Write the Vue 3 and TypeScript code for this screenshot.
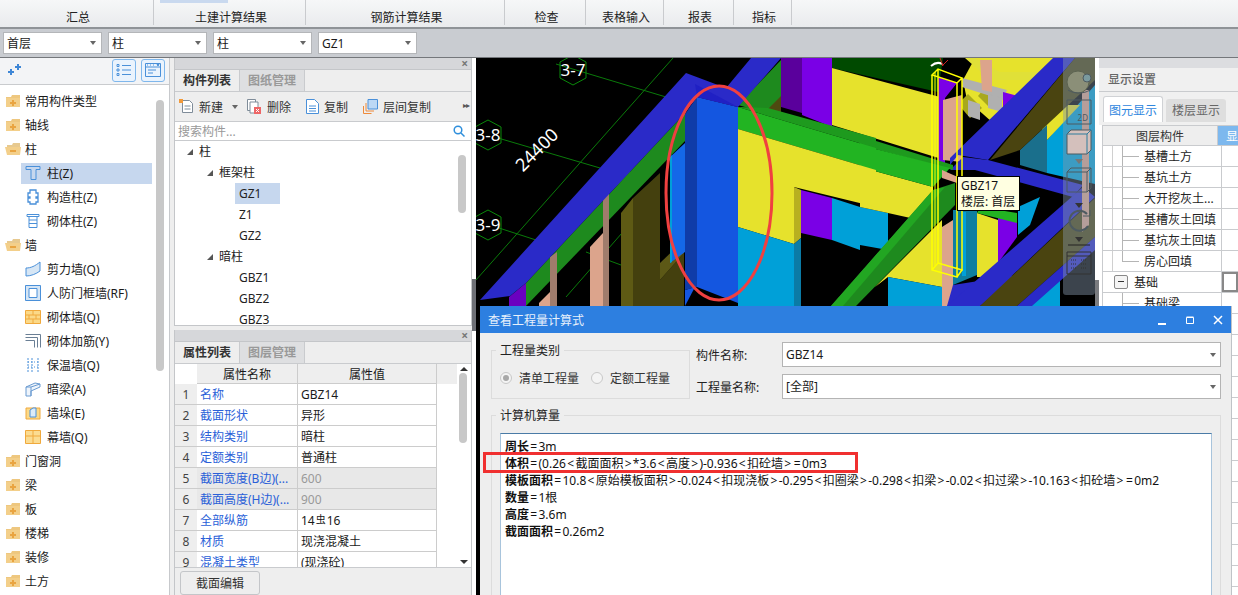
<script setup lang="ts">
interface TreeRow { label: string; icon: string; level: number; selected?: boolean }
const ribbon = [
  { label: '汇总', w: 154 }, { label: '土建计算结果', w: 152 }, { label: '钢筋计算结果', w: 199 },
  { label: '检查', w: 81 }, { label: '表格输入', w: 78 }, { label: '报表', w: 70 }, { label: '指标', w: 58 },
]
const selects = ['首层', '柱', '柱', 'GZ1']
const leftTree: TreeRow[] = [
  { label: '常用构件类型', icon: 'folder', level: 0 }, { label: '轴线', icon: 'folder', level: 0 },
  { label: '柱', icon: 'open', level: 0 }, { label: '柱(Z)', icon: 'col', level: 1, selected: true },
  { label: '构造柱(Z)', icon: 'gz', level: 1 }, { label: '砌体柱(Z)', icon: 'qt', level: 1 },
  { label: '墙', icon: 'open', level: 0 }, { label: '剪力墙(Q)', icon: 'shear', level: 1 },
  { label: '人防门框墙(RF)', icon: 'door', level: 1 }, { label: '砌体墙(Q)', icon: 'brick', level: 1 },
  { label: '砌体加筋(Y)', icon: 'rebar', level: 1 }, { label: '保温墙(Q)', icon: 'warm', level: 1 },
  { label: '暗梁(A)', icon: 'beam', level: 1 }, { label: '墙垛(E)', icon: 'pier', level: 1 },
  { label: '幕墙(Q)', icon: 'curtain', level: 1 }, { label: '门窗洞', icon: 'folder', level: 0 },
  { label: '梁', icon: 'folder', level: 0 }, { label: '板', icon: 'folder', level: 0 },
  { label: '楼梯', icon: 'folder', level: 0 }, { label: '装修', icon: 'folder', level: 0 },
  { label: '土方', icon: 'folder', level: 0 },
]
const compTree = [
  { label: '柱', level: 0, arrow: true }, { label: '框架柱', level: 1, arrow: true },
  { label: 'GZ1', level: 2, selected: true }, { label: 'Z1', level: 2 }, { label: 'GZ2', level: 2 },
  { label: '暗柱', level: 1, arrow: true }, { label: 'GBZ1', level: 2 }, { label: 'GBZ2', level: 2 }, { label: 'GBZ3', level: 2 },
]
const props = [
  ['名称', 'GBZ14'], ['截面形状', '异形'], ['结构类别', '暗柱'], ['定额类别', '普通柱'],
  ['截面宽度(B边)(...', '600'], ['截面高度(H边)(...', '900'], ['全部纵筋', ''],
  ['材质', '现浇混凝土'], ['混凝土类型', '(现浇砼)'],
]
const layerRows = ['基槽土方', '基坑土方', '大开挖灰土...', '基槽灰土回填', '基坑灰土回填', '房心回填']
const emptyRows = Array.from({ length: 14 }, (_, i) => i)
const calc = [
  ['周长', '=3m'],
  ['体积', '=(0.26<截面面积>*3.6<高度>)-0.936<扣砼墙>=0m3'],
  ['模板面积', '=10.8<原始模板面积>-0.024<扣现浇板>-0.295<扣圈梁>-0.298<扣梁>-0.02<扣过梁>-10.163<扣砼墙>=0m2'],
  ['数量', '=1根'], ['高度', '=3.6m'], ['截面面积', '=0.26m2'],
]
const tokens = (s: string) => s.split(/([<>=])/).filter((t) => t.length > 0)
const isSym = (t: string) => t === '<' || t === '>' || t === '='
const shapes: [string, string][] = [
  ['#004a00', '832,58 943,58 938,92 832,68'],
  ['#e6e22c', '832,68 940,97 945,160 832,125'],
  ['#5a009c', '781,58 802,58 802,113 781,107'],
  ['#7a00e6', '802,58 832,58 832,127 802,115'],
  ['#1e8a1e', '738,105 781,60 781,100 766,113'],
  ['#4e4a10', '765,112 781,96 781,112'],
  ['#7a00e6', '938,77 957,83 945,98 945,165 938,165'],
  ['#e6e22c', '975,58 1055,58 992,122 967,100 963,80'],
  ['#a8a81c', '968,94 982,108 970,118 958,104'],
  ['#a8a81c', '988,84 1000,96 990,108 978,96'],
  ['#e0e038', '965,58 975,58 1000,72 1040,72 1030,80 990,80'],
  ['#b0b0b0', '962,78 1007,90 1003,100 962,87'],
  ['#b0b0b0', '968,100 980,104 980,120 968,116'],
  ['#b0b0b0', '988,94 1002,98 1002,112 988,108'],
  ['#7a00e6', '1003,92 1018,96 1006,110 1003,108'],
  ['#dca48c', '980,60 992,60 992,92 982,90'],
  ['#dca48c', '943,100 962,95 962,162 943,160'],
  ['#00a0d8', '1047,140 1095,85 1095,184 1047,173'],
  ['#e6e22c', '1040,125 1060,105 1080,105 1047,140'],
  ['#1a6f8c', '1020,150 1047,125 1047,173 1020,165'],
  ['#00a0d8', '860,207 888,213 888,250 860,245'],
  ['#e6e22c', '860,167 933,187 933,223 888,213 860,207'],
  ['#e6e22c', '875,287 942,220 942,287 888,277'],
  ['#00a0d8', '888,277 942,287 942,306 888,306'],
  ['#dca48c', '942,227 953,220 953,306 942,306'],
  ['#0e7fa0', '953,210 977,210 977,275 953,285'],
  ['#00a0d8', '962,212 966,212 966,276 962,276'],
  ['#e6e22c', '977,213 998,220 998,277 977,277'],
  ['#7a00e6', '998,217 1017,220 1017,237 998,263'],
  ['#00a0d8', '1018,207 1040,197 1030,225 1018,235'],
  ['#22b422', '980,207 1017,213 1017,223 977,213'],
  ['#2a2ac8', '953,285 1017,275 980,306 947,306'],
  ['#00a0d8', '1020,306 1060,277 1060,306'],
  ['#2a2ac8', '1053,58 1075,58 988,160 958,155 950,165 950,158'],
  ['#4a4410', '1075,58 1095,58 1095,80 1020,150 990,160'],
  ['#2a2ac8', '963,157 988,160 1083,185 1073,197 975,170 950,170'],
  ['#2a2ac8', '947,306 1083,187 1095,197 980,306'],
  ['#4a4410', '980,306 1095,198 1095,237 1017,306'],
  ['#2a2ac8', '1017,306 1095,237 1095,250 1032,306'],
  ['#dca48c', '1082,90 1089,90 1089,225 1082,232'],
  ['#1e9a1e', '860,136 953,165 953,170 860,145'],
  ['#22b422', '860,145 950,168 933,187 860,167'],
  ['#1e8a1e', '831,306 933,190 955,183 955,205 856,306'],
  ['#22a622', '831,306 933,190 945,187 843,306'],
  ['#dca48c', '942,170 960,178 957,183 942,178'],
  ['#1e9a1e', '768,108 876,138 876,148 738,107'],
  ['#22b422', '738,107 876,148 876,170 738,129'],
  ['#e6e22c', '738,129 876,170 876,207 794,187 794,244 738,227'],
  ['#b8b020', '794,187 801,190 801,238 794,244'],
  ['#7a00e6', '801,190 832,198 832,240 801,233'],
  ['#00a0d8', '832,198 860,207 860,250 832,240'],
  ['#00a0d8', '738,227 794,244 794,306 738,306'],
  ['#0b7ba6', '794,244 801,238 801,306 794,306'],
  ['#1e8a1e', '526,283 685,113 685,141 526,306'],
  ['#6a00c0', '509,297 526,283 526,306 509,306'],
  ['#5e5a14', '621,213 633,198 633,306 621,306'],
  ['#44400e', '633,198 660,173 660,280 684,253 684,306 633,306'],
  ['#5c5816', '660,263 684,240 684,253 660,280'],
  ['#a07c6c', '603,193 609,193 609,306 603,306'],
  ['#dca48c', '590,247 603,233 603,306 590,306'],
  ['#a07c6c', '550,257 557,252 557,306 550,306'],
  ['#dca48c', '539,303 550,292 550,306 539,306'],
  ['#1468e8', '670,157 685,143 685,252 670,263'],
  ['#00a0d8', '670,157 672,155 672,262 670,263'],
  ['#1456e0', '685,290 695,287 685,306'],
  ['#0f3ca8', '685,114 697,97 697,287 685,290'],
  ['#1456e0', '697,97 738,107 738,303 697,287'],
  ['#2a2ac8', '480,300 686,73 726,88 751,58 781,58 738,107 697,97 685,113 526,283 510,296'],
  ['#2020c4', '695,84 738,107 697,97'],
]
const gridLines = [
  [556, 64, 666, 97], [498, 138, 600, 168], [499, 228, 536, 240], [586, 252, 621, 265],
  [673, 58, 476, 280], [636, 217, 566, 297], [630, 172, 604, 198],
]
const hexes = [
  { x: 573, y: 70, t: '3-7' }, { x: 488, y: 135, t: '3-8' }, { x: 488, y: 225, t: '3-9' },
]
const hexPts = (x: number, y: number) =>
  [[0, -15], [13, -8], [13, 8], [0, 15], [-13, 8], [-13, -8]].map(([a, b]) => `${x + a},${y + b}`).join(' ')
</script>

<template>
  <div class="app">
    <svg class="defs" width="0" height="0">
      <symbol id="folder" viewBox="0 0 16 14">
        <path d="M1 3h5l1-2h8v12H1z" fill="#eec77f" /><path d="M1 4h14v9H1z" fill="#f3cf8a" />
        <path d="M7 6h2v2h2v2H9v2H7v-2H5V8h2z" fill="#e9a441" />
      </symbol>
      <symbol id="open" viewBox="0 0 16 14">
        <path d="M2 3h5l1-2h7v4H2z" fill="#e7c98f" /><path d="M0 5h16l-1 8H2z" fill="#f3cf8a" />
        <path d="M5 8h6v2H5z" fill="#e9a441" />
      </symbol>
      <symbol id="col" viewBox="0 0 16 16" fill="none" stroke="#4a90d9">
        <path d="M1 1.5h14v3H11v10H6v-10H1z" />
      </symbol>
      <symbol id="gz" viewBox="0 0 16 16" fill="none" stroke="#4a90d9" stroke-width="1.3">
        <path d="M5 1h6v3h2v4h-2v1h2v4h-2v2H5v-2H3V9h2V8H3V4h2z" />
      </symbol>
      <symbol id="qt" viewBox="0 0 16 16" fill="none" stroke="#4a90d9">
        <path d="M2 1.5h12v2H2zM4 3.5h8v11H4zM4 7h8M4 10.5h8" />
      </symbol>
      <symbol id="shear" viewBox="0 0 16 16" fill="#d6e6f5" stroke="#4a90d9">
        <path d="M1 7c5 0 9-2 14-6v9c-4 3-9 5-14 5z" />
      </symbol>
      <symbol id="door" viewBox="0 0 16 16" fill="#d6e6f5" stroke="#4a90d9">
        <path d="M.5.5h15v15H.5z" /><path d="M4 3.5h8v9H4z" fill="#fff" />
      </symbol>
      <symbol id="brick" viewBox="0 0 16 16" fill="#fbd988" stroke="#f0a93c">
        <path d="M.5 1.5h15v13H.5zM.5 6h15M.5 10h15M8 1.5V6M4 6v4M11 6v4M8 10v4.5" />
      </symbol>
      <symbol id="rebar" viewBox="0 0 16 16" fill="none" stroke="#6a7f95">
        <path d="M.5 1.5h15v13M.5 4.5h12v10M.5 7.5h9v7" />
      </symbol>
      <symbol id="warm" viewBox="0 0 16 16" fill="none" stroke="#4a90d9">
        <path d="M3 1v14M13 1v14M7 1v14" stroke-dasharray="2 1" /><path d="M3 5h10M3 10h10" stroke-dasharray="1 2" />
      </symbol>
      <symbol id="beam" viewBox="0 0 16 16" fill="#eef4fb" stroke="#6a9bd1">
        <path d="M1 6l9-4 5 1v3l-9 4v5H1z" /><path d="M1 6h5v9M6 6l9-3" fill="none" />
      </symbol>
      <symbol id="pier" viewBox="0 0 16 16" fill="#fbd988" stroke="#f0a93c">
        <path d="M1 3h14v11H1z" /><path d="M5 5l3-2h3v9H5z" fill="#dcebf8" stroke="#4a90d9" />
      </symbol>
      <symbol id="curtain" viewBox="0 0 16 16" fill="#fbdc92" stroke="#f0a93c">
        <path d="M.5 1.5h15v13H.5zM.5 7h15M8 1.5v13" />
      </symbol>
    </svg>

    <header class="ribbon">
      <span class="ribbon-mark"></span>
      <div v-for="r in ribbon" :key="r.label" class="ribbon-tab" :style="{ width: r.w + 'px' }">{{ r.label }}</div>
    </header>

    <div class="selectbar">
      <div v-for="(s, i) in selects" :key="i" class="sel"><span>{{ s }}</span><i class="caret"></i></div>
    </div>

    <div class="main">
      <aside class="left">
        <div class="left-head">
          <svg class="sparkle" width="14" height="12" viewBox="0 0 14 12" fill="#3f87d6">
            <path d="M8 2h2V0h2v2h2v2h-2v2h-2V4H8zM1 7h2V5h2v2h2v2H5v2H3V9H1z" />
          </svg>
          <button class="head-btn"><svg width="16" height="14" viewBox="0 0 16 14" fill="none" stroke="#4a90d9"><path d="M1 1.500h2v2H1zM1 6h2v2H1zM1 10.500h2v2H1zM6 2.500h9M6 7h9M6 11.500h9" /></svg></button>
          <button class="head-btn"><svg width="16" height="14" viewBox="0 0 16 14" fill="none" stroke="#4a90d9"><path d="M.5.5h15v13H.5zM.5 4h15" /><path d="M3 7h8M3 10h5" /><path d="M2 2h1M5 2h1M8 2h1M12 1.500h2l-1 1.500z" /></svg></button>
        </div>
        <div class="left-body">
          <div v-for="r in leftTree" :key="r.label" class="lt-row" :class="{ child: r.level === 1 }">
            <div class="lt-inner" :class="{ on: r.selected }">
              <svg class="lt-icon" width="16" height="16"><use :href="'#' + r.icon" /></svg>
              <span>{{ r.label }}</span>
            </div>
          </div>
          <div class="left-scroll"></div>
        </div>
      </aside>

      <section class="mid">
        <div class="pane top-pane">
          <div class="pane-title"><span class="x">×</span></div>
          <div class="tabs">
            <div class="tab on">构件列表</div><div class="tab">图纸管理</div>
          </div>
          <div class="tools">
            <span class="tool t1">
              <svg width="15" height="15" viewBox="0 0 15 15" fill="none" stroke="#7f8c99"><path d="M3.500 1.500h7l3 3v9h-10z" fill="#fff" /><path d="M5.500 7h6M5.500 10h6" /><path d="M0 0h4v4H0z" fill="#f29a3a" stroke="none" /></svg>
              新建<i class="caret tool-caret"></i>
            </span>
            <span class="tool t2">
              <svg width="15" height="15" viewBox="0 0 15 15" fill="none" stroke="#7f8c99"><path d="M.5.5h8v11h-8z" fill="#fff" /><path d="M3 3h8v11H3z" fill="#fff" /><path d="M7 8h7v7H7z" fill="#e66" stroke="none" /><path d="M9 10l3 3M12 10l-3 3" stroke="#fff" /></svg>
              删除
            </span>
            <span class="tool t3">
              <svg width="13" height="15" viewBox="0 0 13 15" fill="none" stroke="#4a90d9"><path d="M.5.5h8l4 4v10H.5z" fill="#fff" /><path d="M3 7h7M3 9.500h7M3 12h7" /></svg>
              复制
            </span>
            <span class="tool t4">
              <svg width="15" height="15" viewBox="0 0 15 15" fill="none"><path d="M5 .5h9.500v9.500H5z" fill="#bcd8f5" stroke="#4a90d9" /><path d="M3 4v8h8M.5 7v7.500h8" stroke="#ee8a3a" /></svg>
              层间复制
            </span>
            <span class="more">▸▸</span>
          </div>
          <div class="search">
            <span>搜索构件...</span>
            <svg width="12" height="12" viewBox="0 0 12 12" fill="none" stroke="#2f8fdc" stroke-width="1.500"><circle cx="5" cy="5" r="3.800" /><path d="M8 8l3.500 3.500" /></svg>
          </div>
          <div class="comp-tree">
            <div v-for="c in compTree" :key="c.label" class="ct-row" :class="'lv' + c.level">
              <i v-if="c.arrow" class="tri"></i>
              <span :class="{ on: c.selected }">{{ c.label }}</span>
            </div>
            <div class="ct-scroll"></div>
          </div>
        </div>

        <div class="pane bottom-pane">
          <div class="pane-title"><span class="x">×</span></div>
          <div class="tabs">
            <div class="tab on">属性列表</div><div class="tab">图层管理</div>
          </div>
          <div class="table-wrap">
            <div class="prop-head">
              <span class="num"></span><span class="ph">属性名称</span><span class="ph ph2">属性值</span><span class="ph3"></span>
            </div>
            <div v-for="(p, i) in props" :key="p[0]" class="prop-row" :class="{ gray: i === 4 || i === 5 }">
              <span class="num">{{ i + 1 }}</span>
              <span class="pn">{{ p[0] }}</span>
              <span v-if="i === 6" class="pv">14<span class="bar-mark">虫</span>16</span>
              <span v-else class="pv">{{ p[1] }}</span>
            </div>
            <div class="vbar"><i class="up"></i><i class="thumb"></i><i class="down"></i></div>
          </div>
          <div class="pane-foot"><button class="foot-btn">截面编辑</button></div>
        </div>
      </section>

      <div class="split"><i></i></div>

      <div class="canvas">
        <svg class="scene" viewBox="476 58 619 537" width="619" height="537">
          <line v-for="(l, i) in gridLines" :key="i" :x1="l[0]" :y1="l[1]" :x2="l[2]" :y2="l[3]" stroke="#0a7a0a" />
          <g v-for="h in hexes" :key="h.t">
            <polygon :points="hexPts(h.x, h.y)" fill="none" stroke="#0a8a0a" />
            <text :x="h.x" :y="h.y + 6" text-anchor="middle" class="hex-t">{{ h.t }}</text>
          </g>
          <text x="537" y="156" text-anchor="middle" class="dim" transform="rotate(-45 537 150)">24400</text>
          <polygon v-for="(s, i) in shapes" :key="i" :fill="s[0]" :points="s[1]" />
          <g fill="none" stroke="#ffff00" stroke-width="1.500">
            <path d="M932 75L938 69L962 78L957 83ZM932 75V270L957 277V83M938 69V263L962 270V78M932 270L938 263L962 270L957 277" />
            <path d="M935 72V266" stroke-width="1" />
          </g>
          <path d="M931 66q6-5 11-2" fill="none" stroke="#fff" stroke-width="2" />
          <path d="M940 58l3 8 M948 60l-6 6" stroke="#c22" fill="none" />
          <ellipse cx="719" cy="193" rx="53" ry="107" fill="none" stroke="#f04040" stroke-width="3" />
        </svg>

        <div class="viewbar">
          <svg width="32" height="237" viewBox="0 0 32 237" fill="none" stroke="#4d5a60">
            <circle cx="15" cy="24" r="11" fill="#8b8f78" stroke="#5c6350" />
            <circle cx="24" cy="20" r="4" fill="#7a9a9e" stroke="#4d5a60" />
            <path d="M5 32c6 4 16 4 22 0" />
            <path d="M4 42h24v24H4z" /><text x="25" y="63" text-anchor="end" class="v2d">2D</text>
            <path d="M4 76l4-4h20v20l-4 4H4z" fill="#d4c0bc" /><path d="M4 76h20v20M24 76l4-4" stroke="#2f7c9c" />
            <path d="M12 101h8l-4 5z" fill="#777" stroke="none" />
            <path d="M4 114l4-4h20v20l-4 4H4z" /><path d="M4 114h20v20M24 114l4-4" />
            <path d="M12 145h8l-4 5z" fill="#333" stroke="none" />
            <path d="M24 156a10 10 0 1 0 1 12" stroke-width="2" /><path d="M20 158h7v-6" />
            <path d="M12 179h8l-4 5z" fill="#333" stroke="none" />
            <path d="M5 187h22" stroke="#222" />
            <path d="M4 194h24v22H4zM4 198h24" stroke="#333" /><path d="M8 202h5M8 206h5M8 210h5M18 202h6M18 206h6M18 210h6" stroke-dasharray="1 1" stroke="#333" />
          </svg>
        </div>

        <div class="tip">GBZ17<br />楼层: 首层</div>
      </div>

      <aside class="right">
        <i class="grip"></i>
        <div class="r-strip"></div>
        <div class="r-title">显示设置</div>
        <div class="r-tabs"><div class="r-tab on">图元显示</div><div class="r-tab">楼层显示</div></div>
        <div class="r-table">
          <div class="r-head"><span class="rh1">图层构件</span><span class="rh2">显</span></div>
          <div v-for="(l, i) in layerRows" :key="l" class="r-row">
            <span class="r-name up-line"><i class="vline" :class="{ last: i === 5 }"></i><i class="hline"></i>{{ l }}</span><span class="r-val"></span>
          </div>
          <div class="r-row">
            <span class="r-name group"><i class="minus"></i>基础</span><span class="r-val cur"></span>
          </div>
          <div class="r-row">
            <span class="r-name"><i class="vline"></i><i class="hline"></i>基础梁</span><span class="r-val"></span>
          </div>
          <div v-for="n in emptyRows" :key="n" class="r-row"><span class="r-name"></span><span class="r-val"></span></div>
        </div>
      </aside>
    </div>

    <div class="dialog">
      <div class="d-title">
        <span>查看工程量计算式</span>
        <div class="d-btns">
          <svg width="10" height="10" viewBox="0 0 10 10"><path d="M1 8h8v2H1z" fill="#fff" /></svg>
          <svg width="10" height="10" viewBox="0 0 10 10" fill="none" stroke="#fff"><path d="M1.500 2.500h7v6h-7zM1.500 2h7" /></svg>
          <svg width="10" height="10" viewBox="0 0 10 10" stroke="#fff" stroke-width="1.500"><path d="M1 1l8 8M9 1l-8 8" /></svg>
        </div>
      </div>
      <div class="d-body">
        <div class="d-top">
          <fieldset class="kind">
            <legend>工程量类别</legend>
            <label class="radio"><i class="dot checked"></i>清单工程量</label>
            <label class="radio"><i class="dot"></i>定额工程量</label>
          </fieldset>
          <div class="fields">
            <div class="field"><span class="f-label">构件名称:</span><div class="f-input">GBZ14<i class="caret"></i></div></div>
            <div class="field"><span class="f-label">工程量名称:</span><div class="f-input">[全部]<i class="caret"></i></div></div>
          </div>
        </div>
        <fieldset class="calc">
          <legend>计算机算量</legend>
          <div class="calc-box">
            <div v-for="c in calc" :key="c[0]" class="calc-line"><b>{{ c[0] }}</b><template v-for="(t, i) in tokens(c[1])" :key="i"><span v-if="isSym(t)" class="sym">{{ t }}</span><template v-else>{{ t }}</template></template></div>
          </div>
        </fieldset>
      </div>
    </div>
    <div class="red-box"></div>
  </div>
</template>

<style>
html, body { margin: 0; background: #eee; }
</style>

<style scoped>
.app {
  position: relative; width: 1238px; height: 595px; overflow: hidden; display: flex; flex-direction: column;
  font-family: "Noto Sans", "Noto Sans CJK SC", sans-serif; font-size: 12px; color: #1a1a1a; background: #eee;
}
.defs { position: absolute; }
.ribbon {
  position: relative; height: 27px; flex: none; display: flex;
  background: linear-gradient(#f6f7f8, #e9ebed); border-bottom: 2px solid #8f9397;
}
.ribbon-mark { position: absolute; left: 160px; top: 0; width: 68px; height: 3px; background: #c9d9ef; }
.ribbon-tab {
  box-sizing: border-box; height: 25px; padding-top: 9px; text-align: center; line-height: 17px;
  border-right: 1px solid #c9cbce; padding-left: 3px; color: #222;
}
.selectbar { height: 29px; flex: none; background: #c9ccd1; display: flex; gap: 6px; padding: 3px 0 0 3px; box-sizing: border-box; border-bottom: 1px solid #74777b; }
.sel {
  width: 99px; height: 22px; box-sizing: border-box; background: #fff; border: 1px solid #b4b6b9; display: flex; align-items: center;
  justify-content: space-between; padding: 0 5px 0 3px; font-size: 12px;
}
.caret { display: inline-block; width: 0; height: 0; border: 3px solid transparent; border-top: 4px solid #666; border-bottom: 0; }
.main { flex: 1; display: flex; min-height: 0; background: #eee; }
.left { width: 170px; flex: none; background: #fff; border-right: 1px solid #c7c9cc; box-sizing: border-box; display: flex; flex-direction: column; }
.left-head { height: 27px; flex: none; box-sizing: border-box; background: #f3f4f6; border-bottom: 1px solid #c9cbce; display: flex; align-items: center; padding: 0 4px 2px 7px; gap: 5px; }
.sparkle { margin-right: auto; }
.head-btn { width: 24px; height: 23px; padding: 0; background: #eaf3fd; border: 1px solid #7fb7ec; border-radius: 3px; display: flex; align-items: center; justify-content: center; }
.left-body { position: relative; flex: 1; padding-top: 4px; }
.lt-row { height: 24px; display: flex; align-items: center; padding-left: 5px; padding-right: 17px; font-size: 12px; }
.lt-row.child { padding-left: 21px; }
.lt-inner { flex: 1; display: flex; align-items: center; height: 21px; gap: 4px; }
.lt-row.child .lt-inner { gap: 6px; padding-left: 4px; }
.lt-inner.on { background: #c6d7ee; }
.lt-icon { flex: none; }
.left-scroll { position: absolute; left: 156px; top: 15px; width: 8px; height: 271px; background: #c8c8c8; border-radius: 4px; }
.mid { width: 298px; margin-left: 4px; flex: none; display: flex; flex-direction: column; gap: 4px; }
.pane { display: flex; flex-direction: column; background: #eee; border: solid #c4c6c9; border-width: 0 1px 1px 1px; box-sizing: border-box; }
.top-pane { height: 268px; flex: none; }
.bottom-pane { flex: 1; border-bottom: 0; min-height: 0; }
.pane-title { height: 11px; flex: none; background: #d6d7da; border-bottom: 1px solid #c4c6c9; display: flex; justify-content: flex-end; align-items: center; padding-right: 3px; }
.x { font-size: 12px; line-height: 11px; color: #777; font-weight: 700; }
.tabs { height: 21px; flex: none; display: flex; border-bottom: 1px solid #c9cbce; background: #eee; }
.tab { width: 64px; text-align: center; line-height: 21px; color: #999; background: #dedfe1; font-weight: 700; border-right: 1px solid #c9cbce; }
.tab.on { color: #333; background: #eee; }
.tools { position: relative; height: 29px; flex: none; border-bottom: 1px solid #c9cbce; }
.tool { position: absolute; top: 0; height: 29px; display: flex; align-items: center; gap: 5px; color: #333; }
.t1 { left: 4px; } .t2 { left: 72px; } .t3 { left: 131px; } .t4 { left: 188px; }
.tool-caret { margin-left: 4px; }
.more { position: absolute; right: 2px; top: 7px; font-size: 8px; color: #555; letter-spacing: -1px; }
.search { height: 18px; flex: none; background: #fff; border-bottom: 1px solid #c9cbce; display: flex; justify-content: space-between; align-items: center; padding: 0 6px 0 3px; color: #999; }
.comp-tree { position: relative; flex: 1; background: #fff; overflow: hidden; }
.ct-row { position: relative; height: 21px; display: flex; align-items: center; color: #222; }
.lv0 { padding-left: 24px; } .lv1 { padding-left: 44px; } .lv2 { padding-left: 60px; }
.ct-row span { display: inline-block; padding: 0 4px; line-height: 21px; min-width: 37px; }
.lv0 span, .lv1 span { padding: 0; min-width: 0; }
.ct-row span.on { background: #c6d7ee; }
.tri { position: absolute; margin-left: -12px; width: 0; height: 0; border: solid transparent; border-width: 0 0 6px 6px; border-bottom-color: #555; }
.ct-scroll { position: absolute; left: 283px; top: 14px; width: 8px; height: 58px; background: #c8c8c8; border-radius: 4px; }
.table-wrap { position: relative; height: 203px; flex: none; overflow: hidden; background: #fff; }
.prop-head { display: flex; height: 20px; }
.prop-head .num { background: #fff; }
.num { width: 22px; flex: none; text-align: center; background: #eee; }
.ph { width: 100px; text-align: center; background: #eee; border-right: 1px solid #ccc; border-bottom: 1px solid #ccc; line-height: 21px; flex: none; height: 19px; }
.ph2 { width: 138px; }
.ph3 { width: 20px; background: #eee; flex: none; }
.prop-row { display: flex; height: 21px; line-height: 21px; }
.pn { flex: none; color: #2a5fd8; border-right: 1px solid #ccc; border-bottom: 1px solid #ccc; padding-left: 3px; box-sizing: border-box; width: 101px; overflow: hidden; white-space: nowrap; }
.pv { width: 139px; flex: none; box-sizing: border-box; border-right: 1px solid #ccc; border-bottom: 1px solid #ccc; padding-left: 3px; }
.bar-mark { font-size: 10px; position: relative; top: -2px; margin: 0 1px; }
.prop-row .num { border-bottom: 1px solid #ccc; box-sizing: border-box; color: #444; }
.gray .pn { background: #e8e8e8; }
.gray .pv { background: #e8e8e8; color: #999; }
.vbar { position: absolute; right: 0; top: 0; width: 14px; height: 100%; background: #fff; }
.vbar i { position: absolute; display: block; }
.up { left: 3px; top: 3px; width: 0; height: 0; border: 4px solid transparent; border-top: 0; border-bottom: 4px solid #333; }
.down { left: 3px; bottom: 3px; width: 0; height: 0; border: 4px solid transparent; border-bottom: 0; border-top: 4px solid #333; }
.thumb { left: 2px; top: 9px; width: 8px; height: 70px; background: #c8c8c8; border-radius: 4px; }
.pane-foot { flex: 1; border-top: 1px solid #c9cbce; padding: 3px 0 0 5px; }
.foot-btn { display: block; width: 80px; height: 24px; background: #eee; border: 1px solid #c4c6c9; border-radius: 3px; font: inherit; color: #333; padding: 0; }
.split { width: 4px; flex: none; background: #fff; position: relative; }
.split i { position: absolute; left: 0; top: 221px; width: 4px; height: 52px; background: #6e7076; }
.canvas { position: relative; width: 619px; flex: none; background: #000; overflow: hidden; }
.scene { display: block; }
.hex-t { fill: #fff; font-size: 17px; font-family: "Noto Sans", sans-serif; }
.dim { fill: #fff; font-size: 18px; font-family: "Noto Sans", sans-serif; }
.v2d { fill: #4d5a60; stroke: none; font-size: 8px; }
.viewbar { position: absolute; left: 587px; top: 0; width: 32px; height: 237px; background: rgba(132, 150, 170, 0.45); border-radius: 0 0 3px 3px; }
.viewbar svg { display: block; }
.tip { position: absolute; left: 481px; top: 118px; width: 63px; height: 35px; box-sizing: border-box; padding: 1px 3px; background: #ffffe1; border: 1px solid #000; line-height: 16px; color: #111; white-space: nowrap; }
.right { position: relative; flex: 1; min-width: 0; background: #fff; border-left: 4px solid #fff; display: flex; flex-direction: column; }
.grip { position: absolute; left: -4px; top: 222px; width: 4px; height: 30px; background: #7a7c80; }
.r-strip { height: 10px; flex: none; background: #dcdde0; }
.r-title { height: 24px; flex: none; box-sizing: border-box; background: #f0f0f0; border-bottom: 1px solid #c9cbce; padding-left: 9px; line-height: 24px; font-size: 12px; font-weight: 500; color: #666; }
.r-tabs { height: 33px; flex: none; box-sizing: border-box; background: #f0f0f0; display: flex; gap: 3px; padding: 4px 0 0 4px; align-items: flex-start; }
.r-tab { width: 60px; height: 23px; margin-top: 3px; line-height: 23px; text-align: center; background: #dedede; border-radius: 3px 3px 0 0; color: #666; }
.r-tab.on { height: 26px; margin-top: 0; line-height: 27px; background: #fff; border: 1px solid #d0d2d5; border-bottom: 0; color: #2e86de; box-sizing: border-box; }
.r-table { flex: 1; border-left: 1px solid #c9cbce; margin-left: 3px; overflow: hidden; }
.r-head { display: flex; height: 21px; background: #eee; border-top: 1px solid #c9cbce; border-bottom: 1px solid #c9cbce; box-sizing: border-box; }
.rh1 { width: 119px; text-align: center; line-height: 21px; color: #333; border-right: 1px solid #c9cbce; box-sizing: border-box; }
.rh2 { flex: 1; background: #7db8ee; color: #fff; padding-left: 8px; line-height: 21px; }
.r-row { display: flex; height: 21px; box-sizing: border-box; border-bottom: 1px solid #c9cbce; }
.r-name { position: relative; width: 119px; box-sizing: border-box; border-right: 1px solid #c9cbce; padding-left: 41px; line-height: 22px; white-space: nowrap; color: #222; }
.r-name.group { padding-left: 31px; }
.vline { position: absolute; left: 19px; top: 0; width: 1px; height: 20px; background: #b5b5b5; }
.vline.last { height: 10px; }
.up-line::before { content: ""; position: absolute; left: 9px; top: 0; width: 1px; height: 20px; background: #d0d0d0; }
.hline { position: absolute; left: 19px; top: 10px; width: 17px; height: 1px; background: #b5b5b5; }
.minus { position: absolute; left: 11px; top: 3px; width: 14px; height: 14px; box-sizing: border-box; background: #f4f4f4; border: 1px solid #888; border-radius: 2px; }
.minus::after { content: ""; position: absolute; left: 3px; top: 5px; width: 6px; height: 1px; background: #333; }
.r-val { flex: 1; box-sizing: border-box; }
.r-val.cur { border: 2px solid #888; }
.dialog { position: absolute; left: 480px; top: 306px; width: 752px; height: 300px; background: #eee; border-right: 1px solid #bfc3c7; box-sizing: border-box; }
.d-title { height: 27px; background: #2d7fe0; color: #e8f1fc; display: flex; align-items: center; justify-content: space-between; padding-left: 8px; }
.d-btns { display: flex; gap: 18px; padding-right: 8px; align-items: center; }
.d-btns svg { display: block; }
.d-body { padding: 9px 10px 0 11px; }
.d-top { display: flex; height: 65px; }
fieldset { margin: 0; padding: 0; border: 1px solid #dcdcdc; min-width: 0; }
legend { margin-left: 4px; padding: 0 4px; line-height: 17px; color: #222; }
.kind { box-sizing: border-box; width: 199px; height: 57px; }
.radio { display: inline-flex; align-items: center; gap: 7px; margin: 10px 10px 0 6px; color: #333; height: 18px; }
.radio + .radio { margin-left: 0; }
.dot { position: relative; width: 10px; height: 10px; border: 1px solid #c8c8c8; border-radius: 50%; background: #f4f4f4; display: inline-block; margin-left: 2px; }
.dot.checked::after { content: ""; position: absolute; left: 2px; top: 2px; width: 6px; height: 6px; border-radius: 50%; background: #a8a8a8; }
.fields { margin-left: 6px; flex: 1; display: flex; flex-direction: column; gap: 7px; }
.field { display: flex; align-items: center; height: 25px; }
.f-label { width: 86px; flex: none; color: #222; }
.f-input { flex: 1; height: 25px; box-sizing: border-box; background: #fff; border: 1px solid #b4b4b4; padding: 0 4px 0 3px; line-height: 23px; display: flex; justify-content: space-between; align-items: center; }
.calc { box-sizing: border-box; height: 300px; border-width: 1px 1px 0 1px; padding: 9px 8px 0 8px; }
.calc legend { margin-left: -4px; }
.calc-box { height: 200px; background: #fff; border: 1px solid #a8c4dc; border-top-color: #4a7ba6; padding: 4px; box-sizing: border-box; }
.calc-line { height: 17px; line-height: 17px; white-space: nowrap; color: #111; }
.calc-line b { font-weight: 600; }
.sym { padding: 0 1.3px; }
.red-box { position: absolute; left: 483px; top: 452px; width: 375px; height: 21px; box-sizing: border-box; border: 3px solid #f03030; }
</style>
